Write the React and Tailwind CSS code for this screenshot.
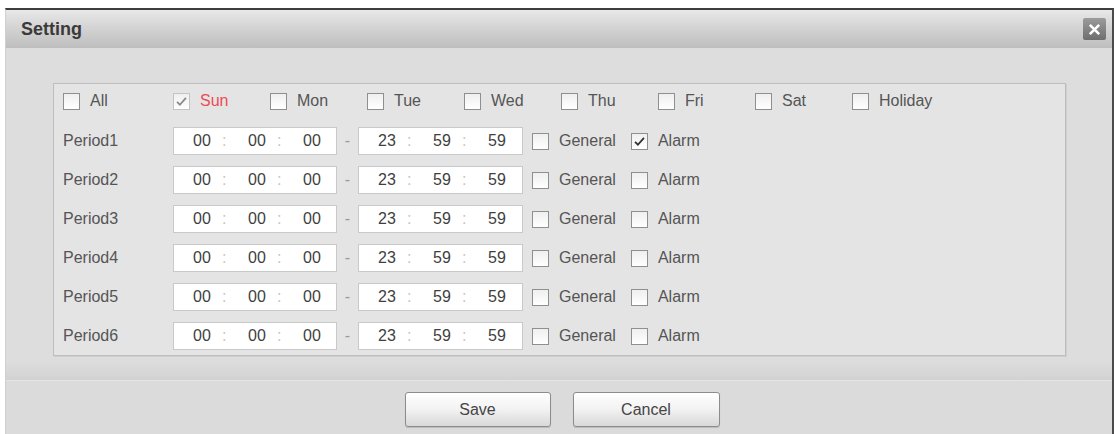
import React from 'react';

const DAYS = ['All', 'Sun', 'Mon', 'Tue', 'Wed', 'Thu', 'Fri', 'Sat', 'Holiday'];
const PERIODS = [1, 2, 3, 4, 5, 6];

function CheckBox({ checked = false, disabled = false }) {
  return (
    <span
      className={`relative inline-flex h-[17px] w-[17px] shrink-0 items-center justify-center border bg-gradient-to-b from-[#efefef] to-white ${
        disabled ? 'border-[#c4c4c4]' : 'border-[#8f8f8f]'
      }`}
    >
      {checked && (
        <svg viewBox="0 0 16 16" className="h-[13px] w-[13px]">
          <path
            d="M2.5 8.5 L6 12 L13.5 3.5"
            fill="none"
            stroke={disabled ? '#8a8a8a' : '#2f2f2f'}
            strokeWidth="2.2"
          />
        </svg>
      )}
    </span>
  );
}

function TimeBox({ values, className = '' }) {
  return (
    <div className={`flex h-[28px] items-center border border-[#c9c9c9] bg-white pl-[8px] text-[16px] text-[#3f3f3f] ${className}`}>
      <span className="w-[40px] text-center">{values[0]}</span>
      <span className="w-[15px] pr-[11px] text-center text-[#c4c4c4]">:</span>
      <span className="w-[40px] text-center">{values[1]}</span>
      <span className="w-[15px] pr-[11px] text-center text-[#c4c4c4]">:</span>
      <span className="w-[40px] text-center">{values[2]}</span>
    </div>
  );
}

function PeriodRow({ n }) {
  return (
    <div className="flex h-[28px] items-center">
      <span className="w-[110px] text-[#555]">Period{n}</span>
      <TimeBox values={['00', '00', '00']} className="w-[164px]" />
      <span className="w-[21px] text-center text-[#9a9a9a]">-</span>
      <TimeBox values={['23', '59', '59']} className="w-[165px]" />
      <span className="ml-[9px] flex">
        <CheckBox />
      </span>
      <span className="ml-[10px] text-[#555]">General</span>
      <span className="ml-[15px] flex">
        <CheckBox checked={n === 1} />
      </span>
      <span className="ml-[10px] text-[#555]">Alarm</span>
    </div>
  );
}

export default function App() {
  return (
    <div className="h-[434px] w-[1117px] overflow-hidden bg-white pl-[5px] pt-[8px] font-['Liberation_Sans',Arial,sans-serif] text-[16px]">
      <div className="flex h-[426px] w-[1109px] flex-col border-t-2 border-r-2 border-l border-t-[#3d3d3d] border-r-[#4a4a4a] border-l-[#d0d0d0]">
        {/* title bar */}
        <div className="flex h-[38px] items-center justify-between bg-gradient-to-b from-[#e8e8e8] via-[#d2d2d2] to-[#bebebe] pl-[15px] pr-[6px]">
          <span className="text-[18px] font-bold text-[#3a3a3a]">Setting</span>
          <button className="flex h-[22px] w-[23px] shrink-0 items-center justify-center rounded-[2px] bg-gradient-to-b from-[#9c9c9c] to-[#6e6e6e] p-0">
            <svg viewBox="0 0 16 16" className="h-[15px] w-[15px]">
              <path d="M3 3 L13 13 M13 3 L3 13" stroke="#fff" strokeWidth="2.8" />
            </svg>
          </button>
        </div>

        {/* schedule panel */}
        <div className="bg-[#dddddd] pl-[47px] pr-[46px] pt-[35px] pb-[7px]">
          <div className="border border-[#bdbdbd] bg-[#e4e4e4] pb-[5px] pl-[9px] pt-[7px] shadow-[1px_1px_0_#cfcfcf]">
            <div className="flex h-[20px] items-center">
              {DAYS.map((d, i) => (
                <div key={d} className={`flex items-center gap-[10px] ${i === 0 ? 'w-[110px]' : 'w-[97px]'}`}>
                  <CheckBox checked={d === 'Sun'} disabled={d === 'Sun'} />
                  <span className={d === 'Sun' ? 'text-[#ee4a55]' : 'text-[#555]'}>{d}</span>
                </div>
              ))}
            </div>
            <div className="mt-[16px] flex flex-col gap-[11px]">
              {PERIODS.map((n) => (
                <PeriodRow key={n} n={n} />
              ))}
            </div>
          </div>
        </div>
        <div className="h-[17px] bg-gradient-to-b from-[#dcdcdc] to-[#d2d2d2]" />

        {/* footer buttons */}
        <div className="flex flex-1 justify-center gap-[22px] border-t border-[#e4e4e4] bg-[#dbdbdb] pl-[6px] pt-[11px]">
          <button className="h-[35px] w-[146px] rounded-[3px] border border-[#8c8c8c] bg-gradient-to-b from-white via-[#f2f2f2] to-[#d8d8d8] text-[16px] text-[#454545] shadow-[0_1px_1px_rgba(0,0,0,0.15)]">
            Save
          </button>
          <button className="h-[35px] w-[147px] rounded-[3px] border border-[#8c8c8c] bg-gradient-to-b from-white via-[#f2f2f2] to-[#d8d8d8] text-[16px] text-[#454545] shadow-[0_1px_1px_rgba(0,0,0,0.15)]">
            Cancel
          </button>
        </div>
      </div>
    </div>
  );
}
